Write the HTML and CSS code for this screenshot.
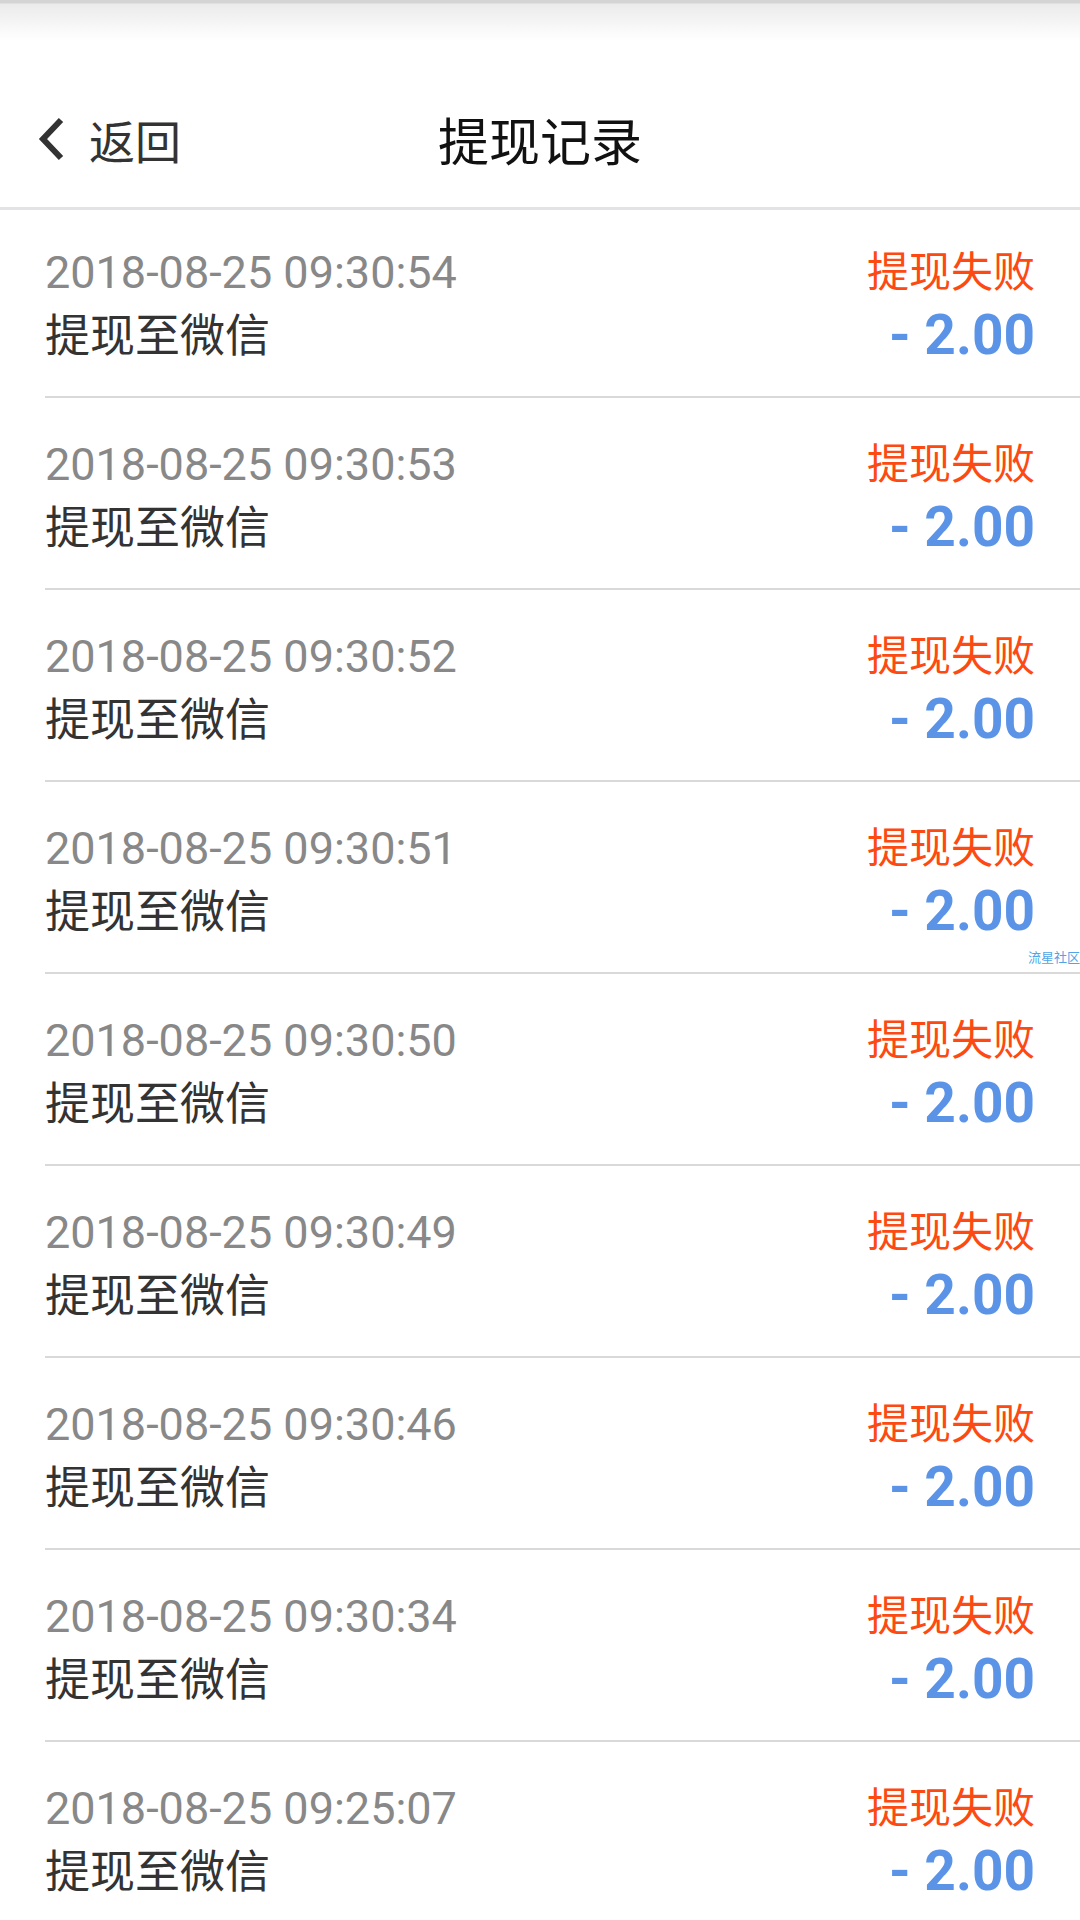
FILE: index.html
```html
<!DOCTYPE html>
<html lang="zh-CN">
<head>
    <meta charset="UTF-8">
    <meta name="viewport" content="width=device-width, initial-scale=1.0">
    <title>提现记录</title>
    <link rel="stylesheet" href="styles.css">
</head>
<body>
    <div class="header">
        <div class="status-bar"></div>
        <div class="nav-bar">
            <a class="back" href="#">
                <svg class="back-icon" viewBox="0 0 28 44" width="28" height="44">
                    <path d="M24 3 L6 22 L24 41" fill="none" stroke="#333" stroke-width="6"/>
                </svg>
                <span>返回</span>
            </a>
            <div class="nav-title">提现记录</div>
        </div>
    </div>

    <div class="record-list">
        <div class="record">
            <div class="record-left">
                <div class="record-time">2018-08-25 09:30:54</div>
                <div class="record-name">提现至微信</div>
            </div>
            <div class="record-right">
                <div class="record-status">提现失败</div>
                <div class="record-amount">- 2.00</div>
            </div>
        </div>
        <div class="record">
            <div class="record-left">
                <div class="record-time">2018-08-25 09:30:53</div>
                <div class="record-name">提现至微信</div>
            </div>
            <div class="record-right">
                <div class="record-status">提现失败</div>
                <div class="record-amount">- 2.00</div>
            </div>
        </div>
        <div class="record">
            <div class="record-left">
                <div class="record-time">2018-08-25 09:30:52</div>
                <div class="record-name">提现至微信</div>
            </div>
            <div class="record-right">
                <div class="record-status">提现失败</div>
                <div class="record-amount">- 2.00</div>
            </div>
        </div>
        <div class="record">
            <div class="record-left">
                <div class="record-time">2018-08-25 09:30:51</div>
                <div class="record-name">提现至微信</div>
            </div>
            <div class="record-right">
                <div class="record-status">提现失败</div>
                <div class="record-amount">- 2.00</div>
            </div>
            <span class="watermark">流星社区</span>
        </div>
        <div class="record">
            <div class="record-left">
                <div class="record-time">2018-08-25 09:30:50</div>
                <div class="record-name">提现至微信</div>
            </div>
            <div class="record-right">
                <div class="record-status">提现失败</div>
                <div class="record-amount">- 2.00</div>
            </div>
        </div>
        <div class="record">
            <div class="record-left">
                <div class="record-time">2018-08-25 09:30:49</div>
                <div class="record-name">提现至微信</div>
            </div>
            <div class="record-right">
                <div class="record-status">提现失败</div>
                <div class="record-amount">- 2.00</div>
            </div>
        </div>
        <div class="record">
            <div class="record-left">
                <div class="record-time">2018-08-25 09:30:46</div>
                <div class="record-name">提现至微信</div>
            </div>
            <div class="record-right">
                <div class="record-status">提现失败</div>
                <div class="record-amount">- 2.00</div>
            </div>
        </div>
        <div class="record">
            <div class="record-left">
                <div class="record-time">2018-08-25 09:30:34</div>
                <div class="record-name">提现至微信</div>
            </div>
            <div class="record-right">
                <div class="record-status">提现失败</div>
                <div class="record-amount">- 2.00</div>
            </div>
        </div>
        <div class="record">
            <div class="record-left">
                <div class="record-time">2018-08-25 09:25:07</div>
                <div class="record-name">提现至微信</div>
            </div>
            <div class="record-right">
                <div class="record-status">提现失败</div>
                <div class="record-amount">- 2.00</div>
            </div>
        </div>
    </div>
</body>
</html>
```

FILE: styles.css
```css
body {
    margin: 0;
    background-color: #fff;
    font-family: Roboto, "Noto Sans CJK SC", sans-serif;
    overflow: hidden;
}

/* Header */
.header {
    border-bottom: 3px solid #e3e3e6;
}

.status-bar {
    height: 70px;
    background: linear-gradient(#d4d4d4 0, #d4d4d4 3px, #ebebeb 4px, #f8f8f8 28px, #fff 42px);
}

.nav-bar {
    position: relative;
    height: 137px;
    display: flex;
    align-items: center;
    justify-content: center;
}

.back {
    position: absolute;
    left: 37px;
    top: 0;
    bottom: 0;
    display: flex;
    align-items: center;
    gap: 24px;
    color: #333;
    font-size: 46px;
    text-decoration: none;
}

.back-icon {
    display: block;
}

.nav-title {
    color: #111;
    font-size: 51px;
}

/* Records */
.record {
    position: relative;
    display: flex;
    justify-content: space-between;
    margin-left: 45px;
    padding: 35px 45px 27px 0;
    border-bottom: 2px solid #d9d9d9;
}

.record:first-child {
    padding-top: 31px;
}

.record-left,
.record-right {
    display: flex;
    flex-direction: column;
}

.record-right {
    align-items: flex-end;
}

.record-time {
    height: 64px;
    line-height: 64px;
    color: #888;
    font-size: 45px;
}

.record-name {
    height: 64px;
    line-height: 64px;
    color: #333;
    font-size: 45px;
}

.record-status {
    height: 64px;
    line-height: 64px;
    color: #fd4a12;
    font-size: 42px;
}

.record-amount {
    height: 64px;
    line-height: 60px;
    color: #5b94e7;
    font-size: 55px;
    font-weight: bold;
}

.watermark {
    position: absolute;
    right: 0;
    bottom: 6px;
    color: #4ea5e8;
    font-size: 13px;
    line-height: 16px;
}
```
